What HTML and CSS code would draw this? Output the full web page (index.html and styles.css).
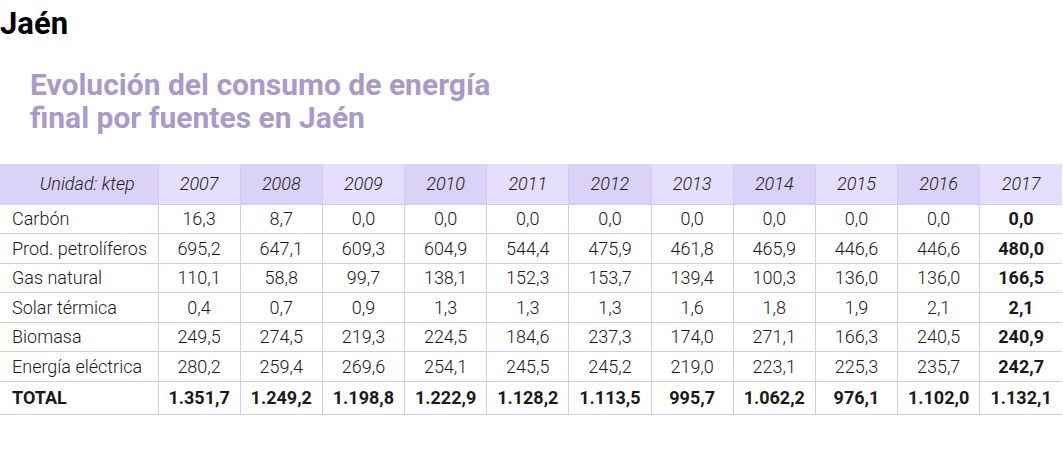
FILE: index.html
```html
<!DOCTYPE html>
<html lang="es">
<head>
<meta charset="utf-8">
<link rel="stylesheet" href="styles.css">
</head>
<body>
<h1 class="place">Jaén</h1>
<h2 class="subtitle">Evolución del consumo de energía<br>final por fuentes en Jaén</h2>
<table class="data">
<colgroup>
<col class="col-label">
<col span="11">
</colgroup>
<thead>
<tr>
<th class="unit dark">Unidad: ktep</th>
<th class="light">2007</th><th class="dark">2008</th><th class="light">2009</th><th class="dark">2010</th><th class="light">2011</th><th class="dark">2012</th><th class="light">2013</th><th class="dark">2014</th><th class="light">2015</th><th class="dark">2016</th><th class="light">2017</th>
</tr>
</thead>
<tbody>
<tr><td class="label">Carbón</td><td>16,3</td><td>8,7</td><td>0,0</td><td>0,0</td><td>0,0</td><td>0,0</td><td>0,0</td><td>0,0</td><td>0,0</td><td>0,0</td><td class="last">0,0</td></tr>
<tr><td class="label">Prod. petrolíferos</td><td>695,2</td><td>647,1</td><td>609,3</td><td>604,9</td><td>544,4</td><td>475,9</td><td>461,8</td><td>465,9</td><td>446,6</td><td>446,6</td><td class="last">480,0</td></tr>
<tr><td class="label">Gas natural</td><td>110,1</td><td>58,8</td><td>99,7</td><td>138,1</td><td>152,3</td><td>153,7</td><td>139,4</td><td>100,3</td><td>136,0</td><td>136,0</td><td class="last">166,5</td></tr>
<tr><td class="label">Solar térmica</td><td>0,4</td><td>0,7</td><td>0,9</td><td>1,3</td><td>1,3</td><td>1,3</td><td>1,6</td><td>1,8</td><td>1,9</td><td>2,1</td><td class="last">2,1</td></tr>
<tr><td class="label">Biomasa</td><td>249,5</td><td>274,5</td><td>219,3</td><td>224,5</td><td>184,6</td><td>237,3</td><td>174,0</td><td>271,1</td><td>166,3</td><td>240,5</td><td class="last">240,9</td></tr>
<tr><td class="label">Energía eléctrica</td><td>280,2</td><td>259,4</td><td>269,6</td><td>254,1</td><td>245,5</td><td>245,2</td><td>219,0</td><td>223,1</td><td>225,3</td><td>235,7</td><td class="last">242,7</td></tr>
<tr class="total"><td class="label">TOTAL</td><td>1.351,7</td><td>1.249,2</td><td>1.198,8</td><td>1.222,9</td><td>1.128,2</td><td>1.113,5</td><td>995,7</td><td>1.062,2</td><td>976,1</td><td>1.102,0</td><td>1.132,1</td></tr>
</tbody>
</table>
</body>
</html>
```
FILE: styles.css
```css
html, body {
  margin: 0;
  padding: 0;
  background: #ffffff;
  font-family: Roboto, "Liberation Sans", sans-serif;
}

.place {
  margin: 0;
  padding-top: 6px;
  font-size: 31px;
  line-height: 36px;
  font-weight: 700;
  color: #000000;
}

.subtitle {
  margin: 26px 0 0 0;
  padding-left: 30px;
  font-size: 30px;
  line-height: 33px;
  font-weight: 700;
  color: #a99bc9;
}

.data {
  margin-top: 30px;
  width: 1062px;
  border-collapse: collapse;
  table-layout: fixed;
  font-size: 18px;
  color: #1a1a1a;
}

.col-label {
  width: 158px;
}

.data th,
.data td {
  box-sizing: border-box;
  padding: 0;
  text-align: center;
  border-left: 1px solid #d3c8f8;
  border-bottom: 1px solid #d3c8f8;
}

.data th:first-child,
.data td:first-child {
  border-left: none;
}

.data th {
  height: 40px;
  font-style: italic;
  font-weight: 300;
}

.data th.dark {
  background: #dbd2f8;
}

.data th.light {
  background: #e5defc;
}

.data th.unit {
  padding-left: 17px;
}

.data td {
  height: 29.5px;
  font-weight: 300;
}

.data td.label {
  text-align: left;
  padding-left: 12px;
}

.data td.last {
  font-weight: 700;
}

.data tr.total td {
  height: 33px;
  font-weight: 700;
}
```
